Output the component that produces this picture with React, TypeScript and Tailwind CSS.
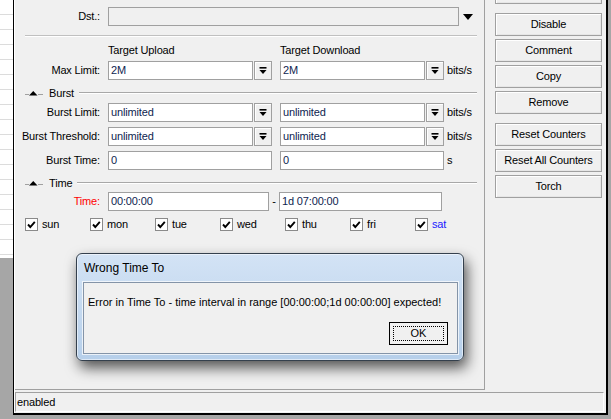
import React from "react";

const Label = ({ children, red }: { children: React.ReactNode; red?: boolean }) => (
  <div className={`w-[85px] shrink-0 text-right ${red ? "text-[#ff0000]" : "text-black"}`}>{children}</div>
);

const Field = ({ w, children, disabled }: { w: string; children?: React.ReactNode; disabled?: boolean }) => (
  <div
    className={`${w} h-[19px] shrink-0 border border-[#a0a0a0] ${disabled ? "bg-[#f0f0f0]" : "bg-white"} flex items-center pl-[2px] text-[#0e1e50] leading-none`}
  >
    {children}
  </div>
);

const Spin = () => (
  <div className="w-[18px] h-[19px] shrink-0 border border-[#a0a0a0] bg-[#f0f0f0] flex items-center justify-center shadow-[inset_1px_1px_0_#ffffff]">
    <svg width="8" height="8" viewBox="0 0 8 8">
      <rect x="0.5" y="0" width="7" height="1.6" fill="#000" />
      <polygon points="0.5,3 7.5,3 4,7" fill="#000" />
    </svg>
  </div>
);

const SectionHeader = ({ title }: { title: string }) => (
  <div className="ml-[10px] w-[452px] h-[14px] flex items-center">
    <svg width="18" height="9" viewBox="0 0 18 9" className="shrink-0">
      <rect x="0" y="5" width="4" height="1" fill="#a0a0a0" />
      <rect x="13" y="5" width="5" height="1" fill="#a0a0a0" />
      <polygon points="4,6.5 12.5,6.5 8.25,2" fill="#000" />
    </svg>
    <span className="ml-[6px]">{title}</span>
    <div className="ml-[5px] flex-1 h-[2px] border-t border-[#a8a8a8] border-b border-b-white" />
  </div>
);

const Check = ({ label, blue }: { label: string; blue?: boolean }) => (
  <div className="w-[65px] shrink-0 flex items-center gap-[4px]">
    <div className="w-[13px] h-[13px] border border-[#8a8a8a] bg-white flex items-center justify-center">
      <svg width="11" height="11" viewBox="0 0 11 11">
        <polyline points="2,5.5 4.3,8 8.8,2.8" fill="none" stroke="#000" strokeWidth="1.9" />
      </svg>
    </div>
    <span className={blue ? "text-[#1a1aff]" : "text-black"}>{label}</span>
  </div>
);

const Btn = ({ children, className = "" }: { children?: React.ReactNode; className?: string }) => (
  <div
    className={`w-[107px] h-[23px] shrink-0 border border-[#a0a0a0] bg-[#f0f0f0] shadow-[inset_1px_1px_0_#ffffff,inset_-1px_-1px_0_#e6e6e6] flex items-center justify-center text-black ${className}`}
  >
    {children}
  </div>
);

export default function App() {
  const days = ["sun", "mon", "tue", "wed", "thu", "fri", "sat"];
  return (
    <div className="relative w-[611px] h-[419px] overflow-hidden bg-[#a6a6a6] flex font-['Liberation_Sans',Arial,sans-serif] text-[11px] tracking-[-0.15px]">
      {/* list behind, left strip */}
      <div className="w-[13px] shrink-0 flex flex-col">
        <div className="h-[258px] bg-white flex flex-col">
          {Array.from({ length: 17 }).map((_, i) => (
            <div key={i} className="h-[15px] shrink-0 border-b border-[#dcdcdc]" />
          ))}
        </div>
      </div>

      {/* window */}
      <div className="w-[595px] h-[415px] shrink-0 border-l border-r-2 border-b-2 border-black bg-[#f0f0f0] flex">
        <div className="flex-1 border-l border-white flex flex-col">
          <div className="flex h-[390px]">
            {/* form panel */}
            <div className="w-[470px] h-[390px] shrink-0 border-r border-b border-[#a0a0a0] flex flex-col pt-[7px]">
              <div className="flex items-center h-[19px]">
                <Label>Dst.:</Label>
                <div className="ml-[8px]">
                  <Field w="w-[351px]" disabled />
                </div>
                <svg width="10" height="6" viewBox="0 0 10 6" className="ml-[4px]">
                  <polygon points="0,0 10,0 5,6" fill="#000" />
                </svg>
              </div>

              <div className="mt-[9px] ml-[10px] w-[452px] h-[2px] border-t border-[#c0c0c0] border-b border-b-white" />

              <div className="mt-[6px] flex items-center h-[14px]">
                <div className="w-[93px] shrink-0" />
                <div className="w-[172px] shrink-0">Target Upload</div>
                <div>Target Download</div>
              </div>

              <div className="mt-[4px] flex items-center h-[19px]">
                <Label>Max Limit:</Label>
                <div className="ml-[8px] flex items-center">
                  <Field w="w-[145px]">2M</Field>
                  <div className="ml-[1px]"><Spin /></div>
                  <div className="ml-[8px]"><Field w="w-[145px]">2M</Field></div>
                  <div className="ml-[1px]"><Spin /></div>
                  <span className="ml-[3px]">bits/s</span>
                </div>
              </div>

              <div className="mt-[6px]">
                <SectionHeader title="Burst" />
              </div>

              <div className="mt-[3px] flex items-center h-[19px]">
                <Label>Burst Limit:</Label>
                <div className="ml-[8px] flex items-center">
                  <Field w="w-[145px]">unlimited</Field>
                  <div className="ml-[1px]"><Spin /></div>
                  <div className="ml-[8px]"><Field w="w-[145px]">unlimited</Field></div>
                  <div className="ml-[1px]"><Spin /></div>
                  <span className="ml-[3px]">bits/s</span>
                </div>
              </div>

              <div className="mt-[5px] flex items-center h-[19px]">
                <Label>Burst Threshold:</Label>
                <div className="ml-[8px] flex items-center">
                  <Field w="w-[145px]">unlimited</Field>
                  <div className="ml-[1px]"><Spin /></div>
                  <div className="ml-[8px]"><Field w="w-[145px]">unlimited</Field></div>
                  <div className="ml-[1px]"><Spin /></div>
                  <span className="ml-[3px]">bits/s</span>
                </div>
              </div>

              <div className="mt-[5px] flex items-center h-[19px]">
                <Label>Burst Time:</Label>
                <div className="ml-[8px] flex items-center">
                  <Field w="w-[164px]">0</Field>
                  <div className="ml-[8px]"><Field w="w-[164px]">0</Field></div>
                  <span className="ml-[3px]">s</span>
                </div>
              </div>

              <div className="mt-[6px]">
                <SectionHeader title="Time" />
              </div>

              <div className="mt-[2px] flex items-center h-[19px]">
                <Label red>Time:</Label>
                <div className="ml-[8px] flex items-center">
                  <Field w="w-[161px]">00:00:00</Field>
                  <div className="w-[10px] text-center">-</div>
                  <Field w="w-[163px]">1d 07:00:00</Field>
                </div>
              </div>

              <div className="mt-[7px] ml-[10px] flex items-center h-[13px]">
                {days.map((d) => (
                  <Check key={d} label={d} blue={d === "sat"} />
                ))}
              </div>
            </div>

            {/* buttons panel */}
            <div className="flex-1 flex flex-col pl-[10px]">
              <Btn className="-mt-[19px]" />
              <Btn className="mt-[9px]">Disable</Btn>
              <Btn className="mt-[3px]">Comment</Btn>
              <Btn className="mt-[3px]">Copy</Btn>
              <Btn className="mt-[3px]">Remove</Btn>
              <Btn className="mt-[9px]">Reset Counters</Btn>
              <Btn className="mt-[3px]">Reset All Counters</Btn>
              <Btn className="mt-[3px]">Torch</Btn>
            </div>
          </div>

          {/* status bar */}
          <div className="mt-[2px] w-[589px] h-[20px] border-t border-l border-[#a0a0a0] border-b border-r border-b-white border-r-white flex items-center pl-[1px] text-black">
            enabled
          </div>
        </div>
      </div>

      {/* error dialog */}
      <div className="absolute left-[76px] top-[253px] w-[388px] h-[108px] rounded-[6px] border border-[#34404d] bg-gradient-to-b from-[#d3e3f5] to-[#b6cfea] shadow-[3px_7px_14px_rgba(0,0,0,0.65),inset_0_0_0_1px_rgba(255,255,255,0.55)] flex flex-col tracking-normal">
        <div className="h-[28px] pl-[7px] flex items-center text-[12px] text-black">Wrong Time To</div>
        <div className="ml-[6px] mr-[5px] h-[72px] border border-[#8494a8] bg-[#f0f0f0] shadow-[0_0_0_1px_rgba(255,255,255,0.7)] flex flex-col">
          <div className="pl-[4px] pt-[13px] leading-[13px] text-black">
            Error in Time To - time interval in range [00:00:00;1d 00:00:00] expected!
          </div>
          <div className="mt-auto mb-[8px] mr-[9px] flex justify-end">
            <div className="relative w-[59px] h-[23px] border border-black bg-[#f0f0f0] flex items-center justify-center text-black">
              <div className="absolute inset-[3px] border border-dotted border-black" />
              OK
            </div>
          </div>
        </div>
      </div>
    </div>
  );
}
